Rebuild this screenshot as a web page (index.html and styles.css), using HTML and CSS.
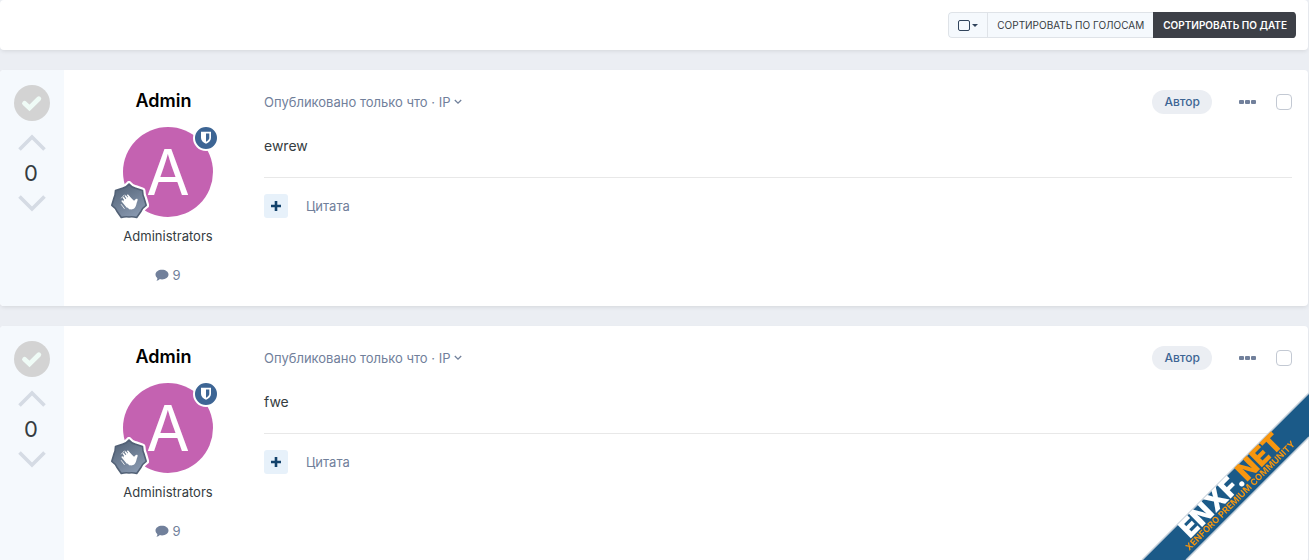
FILE: index.html
```html
<!DOCTYPE html>
<html lang="ru">
<head>
<meta charset="utf-8">
<meta name="viewport" content="width=device-width, initial-scale=1">
<title>Ответы</title>
<link rel="stylesheet" href="styles.css">
</head>
<body>
<svg class="defs" aria-hidden="true">
  <defs>
    <linearGradient id="steel" x1="0" y1="0" x2="0.6" y2="1">
      <stop offset="0" stop-color="#4f5f73"/>
      <stop offset="1" stop-color="#8797ae"/>
    </linearGradient>
    <symbol id="tick" viewBox="0 0 36 36">
      <path d="M10.500 18.300l5 4.700L24.800 13.800" fill="none" stroke="#effbf6" stroke-width="4.800" stroke-linejoin="miter" stroke-linecap="round"/>
    </symbol>
    <symbol id="up" viewBox="0 0 28 18"><path d="M1.500 15.500L14 3l12.500 12.500" fill="none" stroke="#d5dbe4" stroke-width="3.600"/></symbol>
    <symbol id="down" viewBox="0 0 28 18"><path d="M1.500 2.500L14 15l12.500-12.500" fill="none" stroke="#d5dbe4" stroke-width="3.600"/></symbol>
    <symbol id="shield" viewBox="0 0 12 14">
      <path d="M1 .8h10V7c0 2.700-2.300 4.600-5 5.700C3.300 11.600 1 9.700 1 7z" fill="#fff"/>
      <path d="M6 2.500h3.300V7c0 1.500-1.500 2.900-3.300 3.800z" fill="#3d6594"/>
    </symbol>
    <symbol id="rank" viewBox="0 0 40 40">
      <path id="star" d="M20 3Q23 6.800 26.700 7.200L33.500 9.500Q33.600 14 35.100 17.200L37.200 24.300Q33.500 26.800 32.100 30.200L27.700 36.500Q23.500 35.300 20 36Q16.500 35.300 12.300 36.500L7.900 30.200Q6.500 26.800 2.800 24.300L4.900 17.200Q6.400 14 6.500 9.500L13.300 7.200Q17 6.800 20 3z" fill="#fff" stroke="#fff" stroke-width="6" stroke-linejoin="round"/>
      <path d="M20 3Q23 6.800 26.700 7.200L33.500 9.500Q33.600 14 35.100 17.200L37.200 24.300Q33.500 26.800 32.100 30.200L27.700 36.500Q23.500 35.300 20 36Q16.500 35.300 12.300 36.500L7.900 30.200Q6.500 26.800 2.800 24.300L4.900 17.200Q6.400 14 6.500 9.500L13.300 7.200Q17 6.800 20 3z" fill="url(#steel)" stroke="#526176" stroke-width="1.600" stroke-linejoin="round"/>
      <path d="M14 20l5.200 7.200c1.500 1.800 5 1.600 6.800-.8 1.500-1.900 1.300-4.100 2.300-6.200.5-1.300.5-2.200-.2-2.500-1.300-.4-2 1-3.100 2.100L20 15.300z" fill="#fff"/>
      <path d="M18.800 14.200l5 6.300M16.500 15l6 8M14.500 16.800l5 7M13.200 20l5 6" stroke="#fff" stroke-width="1.500" stroke-linecap="round"/>
      <path d="M12.500 17l2.800-3M12.300 23.500l3 4" stroke="#fff" stroke-width=".8" stroke-linecap="round"/>
    </symbol>
    <symbol id="comment" viewBox="0 0 14 13">
      <path d="M7 .8c3.700 0 6.500 2.100 6.500 4.800S10.700 10.400 7 10.400c-.8 0-1.500-.1-2.200-.3-.9.900-2 1.600-3.400 1.800.6-.7 1-1.600 1-2.700C1.200 8.300.5 7 .5 5.600.5 2.900 3.300.8 7 .8z" fill="#71809b"/>
    </symbol>
  </defs>
</svg>

<main class="thread">
  <div class="toolbar">
    <div class="sort">
      <button class="sort-btn select-all" type="button" aria-label="Выбрать"><span class="box"></span><span class="caret"></span></button>
      <button class="sort-btn" type="button">Сортировать по голосам</button>
      <button class="sort-btn active" type="button">Сортировать по дате</button>
    </div>
  </div>

  <article class="post">
    <aside class="votes">
      <button class="best" type="button" aria-label="Лучший ответ"><svg><use href="#tick"/></svg></button>
      <button class="vote" type="button" aria-label="За"><svg><use href="#up"/></svg></button>
      <span class="score">0</span>
      <button class="vote" type="button" aria-label="Против"><svg><use href="#down"/></svg></button>
    </aside>
    <div class="author">
      <h3 class="name"><a href="#">Admin</a></h3>
      <div class="avatar"><span class="letter">A</span>
        <span class="mod"><svg><use href="#shield"/></svg></span>
        <svg class="rank"><use href="#rank"/></svg>
      </div>
      <div class="group">Administrators</div>
      <a class="count" href="#"><svg><use href="#comment"/></svg>9</a>
    </div>
    <div class="content">
      <header class="meta">
        <a class="date" href="#">Опубликовано только что · IP <svg class="chev" viewBox="0 0 8 6"><path d="M.8 1l3.200 3.200L7.200 1" fill="none" stroke="currentColor" stroke-width="1.300"/></svg></a>
        <span class="tag">Автор</span>
        <button class="more" type="button" aria-label="Ещё"><i></i><i></i><i></i></button>
        <input class="pick" type="checkbox" aria-label="Выбрать сообщение">
      </header>
      <p class="text">ewrew</p>
      <footer class="actions">
        <button class="plus" type="button" aria-label="Мультицитата"><svg viewBox="0 0 10 10"><path d="M5 0v10M0 5h10" stroke="#13426b" stroke-width="2.600"/></svg></button>
        <a class="quote" href="#">Цитата</a>
      </footer>
    </div>
  </article>

  <article class="post">
    <aside class="votes">
      <button class="best" type="button" aria-label="Лучший ответ"><svg><use href="#tick"/></svg></button>
      <button class="vote" type="button" aria-label="За"><svg><use href="#up"/></svg></button>
      <span class="score">0</span>
      <button class="vote" type="button" aria-label="Против"><svg><use href="#down"/></svg></button>
    </aside>
    <div class="author">
      <h3 class="name"><a href="#">Admin</a></h3>
      <div class="avatar"><span class="letter">A</span>
        <span class="mod"><svg><use href="#shield"/></svg></span>
        <svg class="rank"><use href="#rank"/></svg>
      </div>
      <div class="group">Administrators</div>
      <a class="count" href="#"><svg><use href="#comment"/></svg>9</a>
    </div>
    <div class="content">
      <header class="meta">
        <a class="date" href="#">Опубликовано только что · IP <svg class="chev" viewBox="0 0 8 6"><path d="M.8 1l3.200 3.200L7.200 1" fill="none" stroke="currentColor" stroke-width="1.300"/></svg></a>
        <span class="tag">Автор</span>
        <button class="more" type="button" aria-label="Ещё"><i></i><i></i><i></i></button>
        <input class="pick" type="checkbox" aria-label="Выбрать сообщение">
      </header>
      <p class="text">fwe</p>
      <footer class="actions">
        <button class="plus" type="button" aria-label="Мультицитата"><svg viewBox="0 0 10 10"><path d="M5 0v10M0 5h10" stroke="#13426b" stroke-width="2.600"/></svg></button>
        <a class="quote" href="#">Цитата</a>
      </footer>
    </div>
  </article>
</main>

<svg class="ribbon" viewBox="0 0 168 168" role="img" aria-label="ENXF.NET">
  <path d="M1 168L168 1v44L45 168z" fill="#1b5a88"/>
  <path d="M1 168L168 1M45 168L168 45" stroke="#c3ced8" stroke-width="1.500"/>
  <g transform="translate(49 147) rotate(-45)">
    <text class="brand" x="0" y="0">ENXF<tspan>.</tspan><tspan class="gold">NET</tspan></text>
    <text class="motto gold" x="-9" y="8">XENFORO PREMIUM COMMUNITY</text>
  </g>
</svg>
</body>
</html>
```

FILE: styles.css
```css
* { box-sizing: border-box; }
html { overflow: hidden; }
body {
  margin: 0;
  background: #ebeef3;
  color: #353c41;
  font: 13px/20px Inter, "Liberation Sans", sans-serif;
}
button { border: 0; padding: 0; background: none; font: inherit; color: inherit; }
a { color: inherit; text-decoration: none; }
svg { display: block; }
.defs { position: absolute; width: 0; height: 0; }

.thread { display: grid; gap: 20px; padding-right: 1px; }
.toolbar, .post {
  background: #fff;
  border-radius: 4px;
  box-shadow: 0 2px 4px -1px rgba(0, 0, 0, .1);
}
.toolbar { display: flex; justify-content: flex-end; padding: 12px 12px; }
.sort { display: flex; border-radius: 4px; overflow: hidden; background: #f5f9fd; }
.sort-btn {
  height: 26px;
  padding: 0 9px;
  border: 1px solid #dfe3e8;
  border-right: 0;
  font-size: 10px;
  text-transform: uppercase;
}
.sort-btn:first-child { border-radius: 4px 0 0 4px; }
.sort-btn.active { border-color: #3d4047; background: #3d4047; color: #fff; font-weight: 600; }
.sort-btn.select-all { display: flex; align-items: center; gap: 2px; }
.box { width: 12px; height: 11px; border: 1px solid #31445c; border-radius: 2px; }
.caret { border: 3px solid transparent; border-top-color: #31445c; border-bottom: 0; }

.post { display: flex; min-height: 236px; }
.votes {
  display: flex;
  flex-direction: column;
  align-items: center;
  flex: none;
  width: 64px;
  padding-top: 15px;
  background: #f5f9fd;
  border-radius: 4px 0 0 4px;
}
.best { width: 36px; height: 36px; margin-bottom: 13px; border-radius: 50%; background: #d3d3d3; }
.best svg { width: 36px; height: 36px; }
.vote svg { width: 28px; height: 18px; }
.score { padding-right: 2px; font-size: 22px; line-height: 42px; }

.author {
  display: flex;
  flex-direction: column;
  align-items: center;
  flex: none;
  width: 200px;
  padding: 20px 0 0 8px;
}
.name { margin: 0 0 15px; padding-right: 9px; font-size: 18px; line-height: 22px; font-weight: 600; color: #000; }
.avatar { position: relative; width: 90px; height: 90px; border-radius: 50%; background: #c462b1; }
.letter { display: block; text-align: center; color: #fff; font-size: 63px; line-height: 90px; }
.mod {
  position: absolute;
  top: -2px;
  right: -6px;
  display: grid;
  place-items: center;
  width: 26px;
  height: 26px;
  border: 2px solid #fff;
  border-radius: 50%;
  background: #3d6594;
}
.mod svg { width: 12px; height: 14px; }
.rank { position: absolute; left: -14px; bottom: -4px; width: 40px; height: 40px; overflow: visible; }
.group { margin-top: 9px; }
.count { display: flex; align-items: center; gap: 3px; margin-top: 19px; color: #71809b; }
.count svg { width: 14px; height: 13px; }

.content { flex: 1; min-width: 0; padding: 20px 16px 0 0; }
.meta { display: flex; align-items: center; color: #71809b; }
.date { display: flex; align-items: center; gap: 4px; margin-right: auto; }
.chev { width: 8px; height: 6px; }
.tag {
  padding: 0 12px;
  border-radius: 12px;
  background: #ebeef3;
  color: #3d6594;
  font-size: 12px;
  line-height: 24px;
  font-weight: 500;
}
.more { display: flex; gap: 1px; margin: 0 20px 0 27px; }
.more i { width: 5px; height: 4px; border-radius: 1px; background: #71809b; }
.pick {
  appearance: none;
  width: 16px;
  height: 16px;
  margin: 0;
  border: 1px solid #c3c9d3;
  border-radius: 4px;
  background: #fff;
}
.text { margin: 21px 0 0; padding-bottom: 20px; border-bottom: 1px solid #e8e8e8; font-size: 14px; line-height: 22px; }
.actions { display: flex; align-items: center; gap: 18px; padding-top: 16px; }
.plus { display: grid; place-items: center; width: 24px; height: 24px; border-radius: 3px; background: #e7f1fa; }
.plus svg { width: 10px; height: 10px; }
.quote { color: #71809b; }

.ribbon { position: fixed; right: 0; bottom: 0; width: 168px; height: 168px; }
.brand { fill: #fff; font: 900 26px Inter, sans-serif; }
.motto { font: 700 9px Inter, sans-serif; }
.gold { fill: #f7960f; }
```
